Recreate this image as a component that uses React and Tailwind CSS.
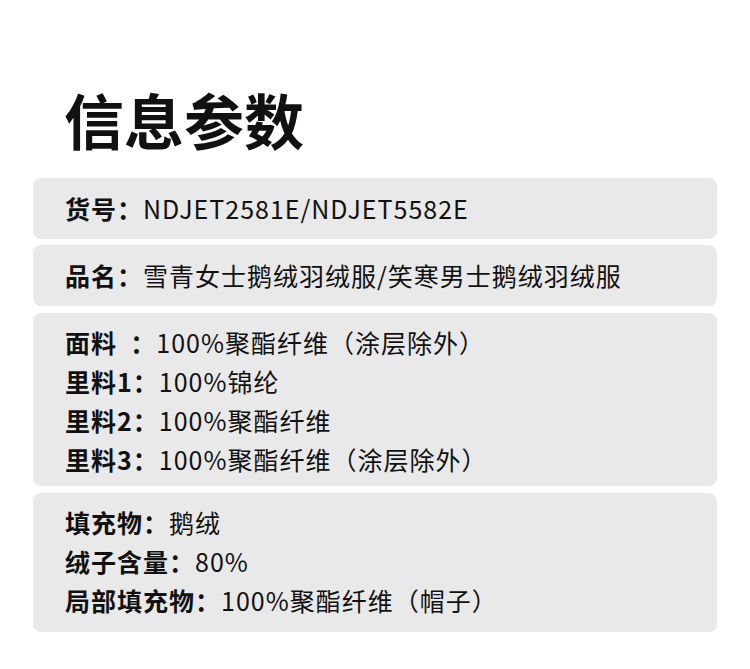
const groups = [
  {
    pad: 'pt-[11px] pb-[11px]',
    rows: [['货号：', 'NDJET2581E/NDJET5582E']],
  },
  {
    pad: 'pt-[11px] pb-[11px]',
    rows: [['品名：', '雪青女士鹅绒羽绒服/笑寒男士鹅绒羽绒服']],
  },
  {
    pad: 'pt-[10px] pb-[7px]',
    rows: [
      ['面料\u00a0\u00a0：', '100%聚酯纤维（涂层除外）'],
      ['里料1：', '100%锦纶'],
      ['里料2：', '100%聚酯纤维'],
      ['里料3：', '100%聚酯纤维（涂层除外）'],
    ],
  },
  {
    pad: 'pt-[10px] pb-[12px]',
    rows: [
      ['填充物：', '鹅绒'],
      ['绒子含量：', '80%'],
      ['局部填充物：', '100%聚酯纤维（帽子）'],
    ],
  },
];

export default function App() {
  return (
    <div
      className="w-[750px] h-[669px] bg-white text-[#111] overflow-hidden"
      style={{ fontFamily: '"Noto Sans CJK SC", "Noto Sans", sans-serif' }}
    >
      <h1 className="pl-[64px] pt-[83px] text-[60px] leading-[72px] font-bold">信息参数</h1>
      <div className="mt-[23px] mx-[33px] flex flex-col">
        {groups.map((g, i) => (
          <div
            key={i}
            className={`bg-[#e9e9e9] rounded-[8px] px-[32px] ${g.pad} ${i === 1 ? 'mt-[6px]' : i > 1 ? 'mt-[7px]' : ''}`}
          >
            {g.rows.map(([label, value]) => (
              <div key={label} className="text-[25px] leading-[39px] tracking-[1px] whitespace-nowrap">
                <span className="font-bold">{label}</span>
                <span>{value}</span>
              </div>
            ))}
          </div>
        ))}
      </div>
    </div>
  );
}
